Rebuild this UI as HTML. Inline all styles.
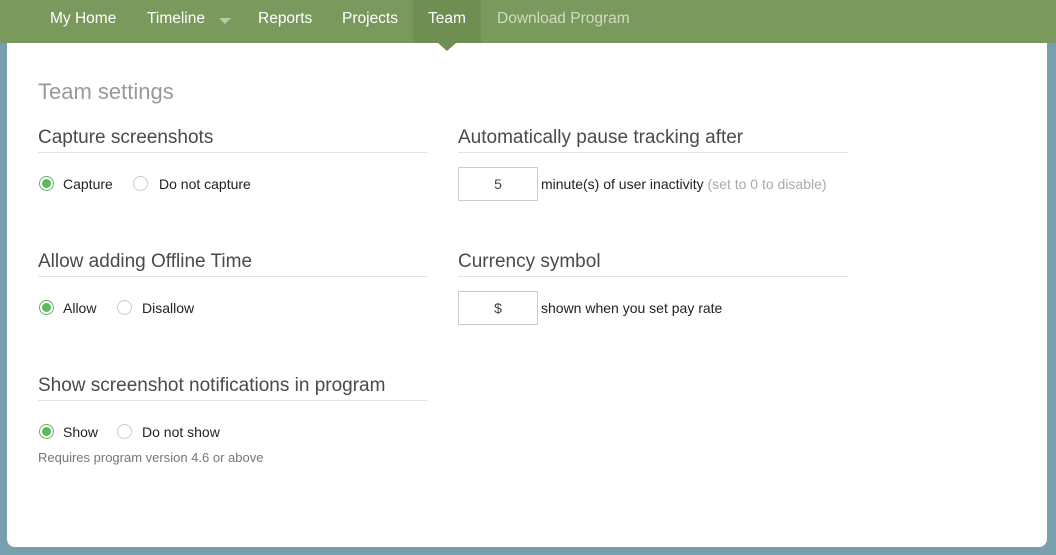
<!DOCTYPE html>
<html><head><style>
body{margin:0;width:1056px;height:555px;background:#789fae;font-family:"Liberation Sans",sans-serif;position:relative;overflow:hidden}
.nav{position:absolute;left:0;top:0;width:1056px;height:43px;background:#7a995d}
.nav span{position:absolute;top:10px;font-size:15.5px;color:#fff}
.team{position:absolute;left:413px;top:0;width:68px;height:43px;background:#6e8e52}
.arrow{position:absolute;left:438px;top:43px;width:0;height:0;border-left:9px solid transparent;border-right:9px solid transparent;border-top:8px solid #6e8e52;z-index:2}
.panel{position:absolute;left:7px;top:43px;width:1040px;height:504px;background:#fff;border-radius:0 0 8px 8px}
.a{position:absolute}
h2{position:absolute;margin:0;font-weight:normal;font-size:19px;color:#4a4a4a;width:390px;border-bottom:1px solid #e3e3e3;padding-bottom:3px}
.r{position:absolute;width:13px;height:13px;border:1px solid #ccc;border-radius:50%;background:#fff}
.r.on{border-color:#5cb85c}
.r.on::after{content:"";position:absolute;left:2px;top:2px;width:9px;height:9px;border-radius:50%;background:#5cb85c}
.l{position:absolute;font-size:14px;color:#222}
.in{position:absolute;width:80px;height:34px;border:1px solid #ccc;box-sizing:border-box;text-align:center;line-height:32px;font-size:14px;color:#444}
</style></head><body>
<div class="nav">
<div class="team"></div>
<span style="left:50px">My Home</span>
<span style="left:147px">Timeline</span>
<div class="a" style="left:219px;top:18px;border-left:6px solid transparent;border-right:6px solid transparent;border-top:6px solid #b8cca5"></div>
<span style="left:258px">Reports</span>
<span style="left:342px">Projects</span>
<span style="left:428px">Team</span>
<span style="left:497px;color:#cfdcc2">Download Program</span>
</div>
<div class="panel"></div>
<div class="arrow"></div>
<div class="a" style="left:38px;top:79px;font-size:22px;color:#999">Team settings</div>

<h2 style="left:38px;top:127px">Capture screenshots</h2>
<div class="r on" style="left:39px;top:176px"></div><div class="l" style="left:63px;top:176px">Capture</div>
<div class="r" style="left:133px;top:176px"></div><div class="l" style="left:159px;top:176px">Do not capture</div>

<h2 style="left:458px;top:127px">Automatically pause tracking after</h2>
<div class="in" style="left:458px;top:167px">5</div>
<div class="l" style="left:541px;top:176px">minute(s) of user inactivity <span style="color:#aaa">(set to 0 to disable)</span></div>

<h2 style="left:38px;top:251px">Allow adding Offline Time</h2>
<div class="r on" style="left:39px;top:300px"></div><div class="l" style="left:63px;top:300px">Allow</div>
<div class="r" style="left:117px;top:300px"></div><div class="l" style="left:142px;top:300px">Disallow</div>

<h2 style="left:458px;top:251px">Currency symbol</h2>
<div class="in" style="left:458px;top:291px">$</div>
<div class="l" style="left:541px;top:300px">shown when you set pay rate</div>

<h2 style="left:38px;top:375px">Show screenshot notifications in program</h2>
<div class="r on" style="left:39px;top:424px"></div><div class="l" style="left:63px;top:424px">Show</div>
<div class="r" style="left:117px;top:424px"></div><div class="l" style="left:142px;top:424px">Do not show</div>
<div class="l" style="left:38px;top:450px;font-size:13px;color:#777">Requires program version 4.6 or above</div>
</body></html>
